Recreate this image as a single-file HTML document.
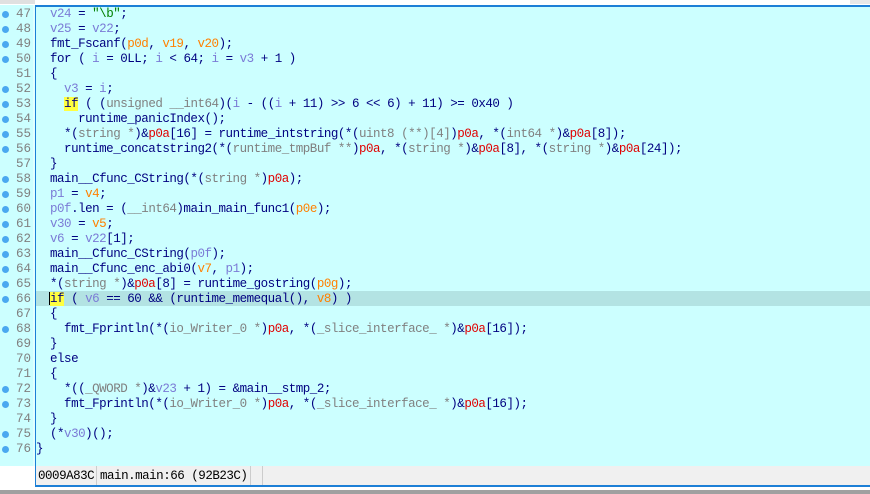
<!DOCTYPE html>
<html><head><style>
body{margin:0;width:870px;height:494px;background:#fff;overflow:hidden;position:relative;font-family:"Liberation Mono",monospace;font-size:12.5px;letter-spacing:-0.48px}
.top{position:absolute;left:0;top:0;width:35px;height:4px;background:#e0e0e0}
.topr{position:absolute;left:850px;top:0;width:20px;height:4px;background:#e8e8e8}
.gut{position:absolute;left:0;top:5px;width:35px;height:461px;background:#ccffff}
.gl{position:absolute;left:33px;top:5px;width:2px;height:461px;background:#e0ffff}
.ed{position:absolute;left:35px;top:5px;width:835px;height:461px;background:#ccffff;border-left:1px solid #1c7fd6;border-top:2px solid #1c7fd6;box-sizing:border-box}
.st{position:absolute;left:35px;top:466px;width:835px;height:21px;background:#f0f0f0;border-left:1px solid #1c7fd6;border-bottom:2px solid #1c7fd6;box-sizing:border-box;color:#000}
.bot{position:absolute;left:0;top:490px;width:870px;height:4px;background:#a0a0a0}
.l{position:absolute;left:0;height:15px;line-height:15px;white-space:pre;width:870px}
.n{position:absolute;left:0;width:31px;text-align:right;color:#808080;letter-spacing:0}
.d{position:absolute;left:2px;top:4px;width:7px;height:7px;border-radius:50%;background:#4aa8f0}
.c{position:absolute;left:50px;color:#000080}
.v{color:#7b7bd6}.a{color:#ff8000}.r{color:#e00000}.t{color:#808080}.s{color:#008000}
.k{background:#ffff40}
.hl{position:absolute;left:36px;top:291px;width:834px;height:15px;background:#b3e3e3}
</style></head><body>
<div class="top"></div><div class="topr"></div>
<div class="gut"></div><div class="gl"></div>
<div class="ed"></div>
<div class="hl"></div>
<div style="position:absolute;left:49px;top:292px;width:2px;height:13px;background:#000"></div>
<div id="L"></div>
<div class="st"><span style="position:absolute;left:2px;top:3px">0009A83C</span><span style="position:absolute;left:60px;top:0;width:1px;height:19px;background:#ccc"></span><span style="position:absolute;left:64px;top:3px">main.main:66 (92B23C)</span><span style="position:absolute;left:214px;top:0;width:1px;height:19px;background:#ccc"></span><span style="position:absolute;left:226px;top:0;width:1px;height:19px;background:#ccc"></span></div>
<div class="bot"></div>
<script>
var L=[
[47,1,'<span class="v">v24</span> = <span class="s">"\\b"</span>;'],
[48,1,'<span class="v">v25</span> = <span class="v">v22</span>;'],
[49,1,'fmt_Fscanf(<span class="a">p0d</span>, <span class="a">v19</span>, <span class="a">v20</span>);'],
[50,1,'for ( <span class="v">i</span> = 0LL; <span class="v">i</span> &lt; 64; <span class="v">i</span> = <span class="v">v3</span> + 1 )'],
[51,0,'{'],
[52,1,'  <span class="v">v3</span> = <span class="v">i</span>;'],
[53,1,'  <span class="k">if</span> ( (<span class="t">unsigned __int64</span>)(<span class="v">i</span> - ((<span class="v">i</span> + 11) &gt;&gt; 6 &lt;&lt; 6) + 11) &gt;= 0x40 )'],
[54,1,'    runtime_panicIndex();'],
[55,1,'  *(<span class="t">string *</span>)&amp;<span class="r">p0a</span>[16] = runtime_intstring(*(<span class="t">uint8 (**)[4]</span>)<span class="r">p0a</span>, *(<span class="t">int64 *</span>)&amp;<span class="r">p0a</span>[8]);'],
[56,1,'  runtime_concatstring2(*(<span class="t">runtime_tmpBuf **</span>)<span class="r">p0a</span>, *(<span class="t">string *</span>)&amp;<span class="r">p0a</span>[8], *(<span class="t">string *</span>)&amp;<span class="r">p0a</span>[24]);'],
[57,0,'}'],
[58,1,'main__Cfunc_CString(*(<span class="t">string *</span>)<span class="r">p0a</span>);'],
[59,1,'<span class="v">p1</span> = <span class="a">v4</span>;'],
[60,1,'<span class="v">p0f</span>.len = (<span class="t">__int64</span>)main_main_func1(<span class="a">p0e</span>);'],
[61,1,'<span class="v">v30</span> = <span class="a">v5</span>;'],
[62,1,'<span class="v">v6</span> = <span class="v">v22</span>[1];'],
[63,1,'main__Cfunc_CString(<span class="v">p0f</span>);'],
[64,1,'main__Cfunc_enc_abi0(<span class="a">v7</span>, <span class="v">p1</span>);'],
[65,1,'*(<span class="t">string *</span>)&amp;<span class="r">p0a</span>[8] = runtime_gostring(<span class="a">p0g</span>);'],
[66,1,'<span class="k">if</span> ( <span class="v">v6</span> == 60 &amp;&amp; (runtime_memequal(), <span class="a">v8</span>) )'],
[67,0,'{'],
[68,1,'  fmt_Fprintln(*(<span class="t">io_Writer_0 *</span>)<span class="r">p0a</span>, *(<span class="t">_slice_interface_ *</span>)&amp;<span class="r">p0a</span>[16]);'],
[69,0,'}'],
[70,0,'else'],
[71,0,'{'],
[72,1,'  *((<span class="t">_QWORD *</span>)&amp;<span class="v">v23</span> + 1) = &amp;main__stmp_2;'],
[73,1,'  fmt_Fprintln(*(<span class="t">io_Writer_0 *</span>)<span class="r">p0a</span>, *(<span class="t">_slice_interface_ *</span>)&amp;<span class="r">p0a</span>[16]);'],
[74,0,'}'],
[75,1,'(*<span class="v">v30</span>)();'],
[76,1,'}']];
var h='';
L.forEach(function(x,i){var y=6.5+i*15.03;var c=x[0]==76?'style="left:36px"':'';
h+='<div class="l" style="top:'+y.toFixed(1)+'px">'+(x[1]?'<span class="d"></span>':'')+'<span class="n">'+x[0]+'</span><span class="c" '+c+'>'+x[2]+'</span></div>';});
document.getElementById('L').innerHTML=h;
</script>
</body></html>
